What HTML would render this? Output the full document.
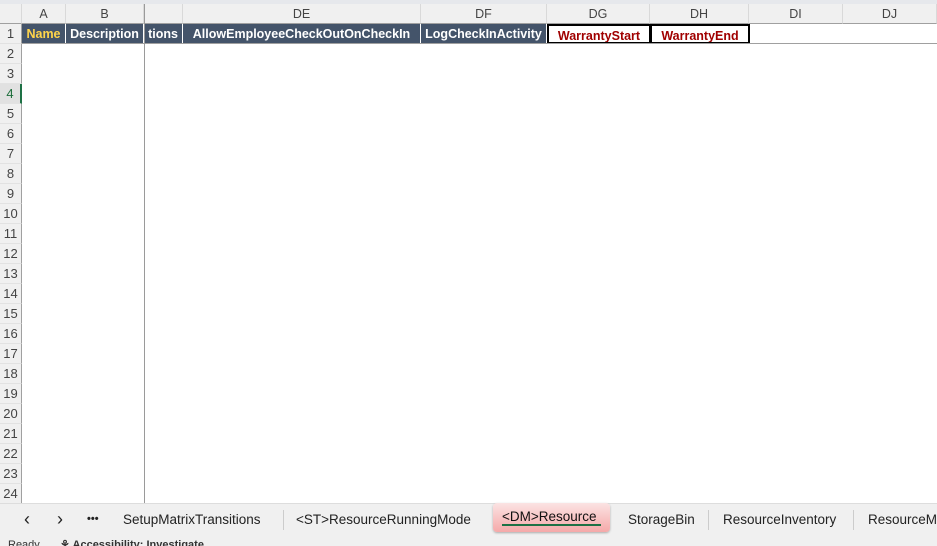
<!DOCTYPE html><html><head><style>
*{margin:0;padding:0;box-sizing:border-box}
body{width:937px;height:546px;overflow:hidden;background:#fff;font-family:"Liberation Sans",sans-serif;position:relative}
.a{position:absolute}
.ch{top:4px;height:20px;background:#f0f0f0;border-right:1px solid #d9d9d9;border-bottom:1px solid #a0a0a0;font-size:12.5px;color:#444;text-align:center;line-height:20px}
.rh{left:0;width:22px;height:20px;background:#f0f0f0;border-bottom:1px solid #e2e2e2;border-right:1px solid #a0a0a0;font-size:13px;color:#444;text-align:center;line-height:20px}
.c{top:24px;height:20px;font-size:12.5px;font-weight:bold;line-height:20px;text-align:center;white-space:nowrap;overflow:hidden}
.d{background:#44546a;color:#fff;border-right:1px solid #fff}
.w{color:#a00000;border:2px solid #000;border-right-width:1px}
.t{top:503px;height:33px;font-size:13.5px;color:#222;line-height:33px}
</style></head><body>
<div class="a" style="left:0;top:0;width:937px;height:4px;background:#e6e8ec"></div>
<div class="a ch" style="left:0;width:22px;background:#f0f0f0"></div>
<div class="a ch" style="left:22px;width:44px">A</div>
<div class="a ch" style="left:66px;width:78px">B</div>
<div class="a ch" style="left:144px;width:39px"></div>
<div class="a ch" style="left:183px;width:238px">DE</div>
<div class="a ch" style="left:421px;width:126px">DF</div>
<div class="a ch" style="left:547px;width:103px">DG</div>
<div class="a ch" style="left:650px;width:99px">DH</div>
<div class="a ch" style="left:749px;width:94px">DI</div>
<div class="a ch" style="left:843px;width:94px">DJ</div>
<div class="a c d" style="left:22px;width:44px;color:#ffd54a">Name</div>
<div class="a c d" style="left:66px;width:78px">Description</div>
<div class="a c d" style="left:144px;width:39px">tions</div>
<div class="a c d" style="left:183px;width:238px">AllowEmployeeCheckOutOnCheckIn</div>
<div class="a c d" style="left:421px;width:126px">LogCheckInActivity</div>
<div class="a c w" style="left:547px;width:103px">WarrantyStart</div>
<div class="a c w" style="left:650px;width:100px;border-right-width:2px">WarrantyEnd</div>
<div class="a" style="left:22px;top:43px;width:915px;height:1px;background:#a0a0a0"></div>
<div class="a" style="left:144px;top:4px;width:1px;height:499px;background:#9a9a9a"></div>
<div id="rows"></div>
<script>
var h='';for(var i=1;i<=24;i++){h+='<div class="a rh" style="top:'+(24+(i-1)*20)+'px;'+(i==4?'color:#1e6e3c;border-right:2px solid #1e7145;background:#e1e1e1':'')+'">'+i+'</div>';}
document.getElementById('rows').innerHTML=h;
</script>
<div class="a" style="left:0;top:503px;width:937px;height:33px;background:#f0f0f0;border-top:1px solid #ddd"></div>
<div class="a t" style="left:24px;font-size:18px">&#x2039;</div>
<div class="a t" style="left:57px;font-size:18px">&#x203A;</div>
<div class="a t" style="left:87px;font-weight:bold;font-size:11px">•••</div>
<div class="a t" style="left:123px">SetupMatrixTransitions</div>
<div class="a" style="left:283px;top:510px;width:1px;height:20px;background:#ccc"></div>
<div class="a t" style="left:296px">&lt;ST&gt;ResourceRunningMode</div>
<div class="a" style="left:493px;top:503px;width:117px;height:29px;background:linear-gradient(#fbe3e3,#f5a9a9);border-radius:4px;box-shadow:0 1px 2px #aaa"></div>
<div class="a t" style="left:502px;top:500px;color:#111">&lt;DM&gt;Resource</div>
<div class="a" style="left:502px;top:524px;width:99px;height:2px;background:#1e7145"></div>
<div class="a t" style="left:628px">StorageBin</div>
<div class="a" style="left:708px;top:510px;width:1px;height:20px;background:#ccc"></div>
<div class="a t" style="left:723px">ResourceInventory</div>
<div class="a" style="left:853px;top:510px;width:1px;height:20px;background:#ccc"></div>
<div class="a t" style="left:868px">ResourceM</div>
<div class="a" style="left:0;top:536px;width:937px;height:10px;background:#f0f0f0;overflow:hidden;font-size:11px;line-height:16px;color:#333"><span style="position:absolute;left:8px;top:1px">Ready</span><span style="position:absolute;left:60px;top:1px;font-weight:bold">&#x2698; Accessibility: Investigate</span></div>
</body></html>
